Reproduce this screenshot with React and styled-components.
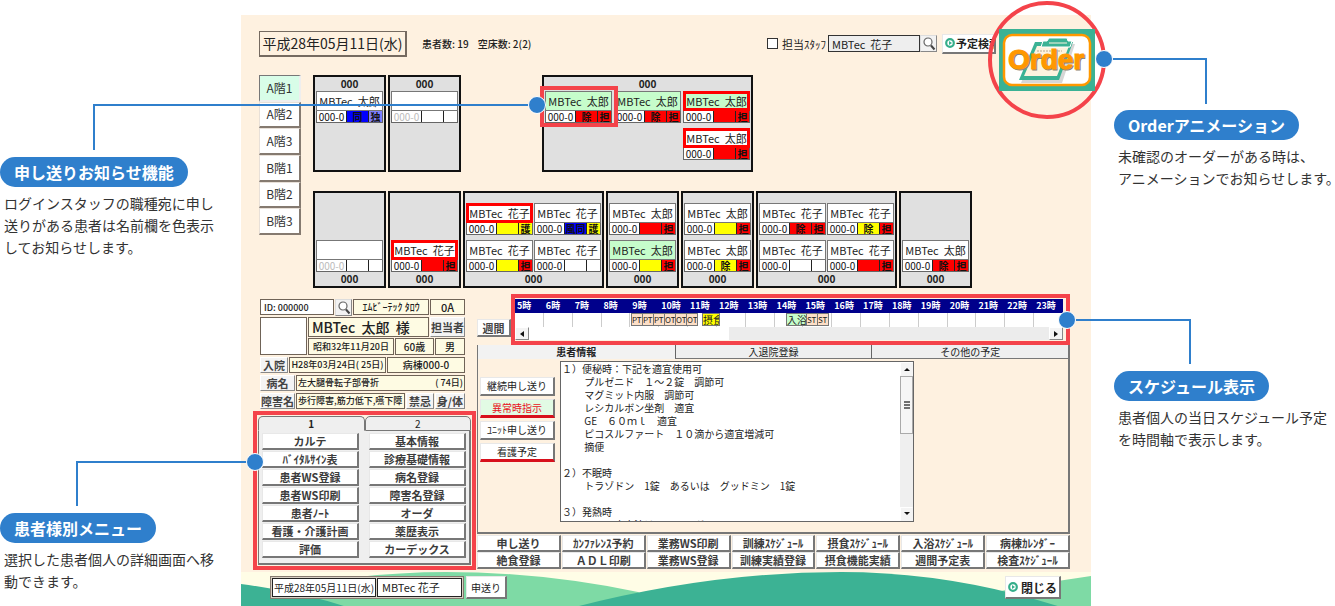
import React from "react";
import styled, { createGlobalStyle, css } from "styled-components";

const GlobalStyle = createGlobalStyle`
  *, *::before, *::after { box-sizing: border-box; }
  body {
    margin: 0;
    background: #fff;
    color: #222;
    font-family: "Noto Sans CJK JP", "Noto Sans", sans-serif;
  }
  button, input, textarea { font-family: inherit; color: inherit; margin: 0; border-radius: 0; }
`;

const BLUE = "#2f7fcc";
const RED = "#f4434a";

/* ---------- page frame and side notes ---------- */

const Page = styled.div`
  display: grid;
  grid-template-columns: 241px minmax(850px, 1fr) 244px;
  min-height: 100vh;
`;

const Aside = styled.aside`
  position: relative;
  z-index: 3;
  display: flex;
  flex-direction: column;
  align-items: flex-start;
  padding-top: ${(p) => p.$top}px;
  padding-left: ${(p) => p.$left || 0}px;
  gap: ${(p) => p.$gap}px;
`;

const NoteTitle = styled.h2`
  display: inline-block;
  margin: 0;
  padding: 0 14px;
  height: 30px;
  line-height: 30px;
  border-radius: 15px;
  background: ${BLUE};
  color: #fff;
  font-size: 16px;
  font-weight: 700;
  white-space: nowrap;
`;

const NoteText = styled.p`
  margin: 5px 0 0;
  padding-left: 4px;
  font-size: 14px;
  line-height: 22px;
  color: #333;
  white-space: nowrap;
`;

const Connector = styled.div`
  position: absolute;
  left: ${(p) => p.$x}px;
  top: ${(p) => p.$y}px;
  width: ${(p) => p.$w}px;
  height: ${(p) => p.$h}px;
  border-top: 2px solid ${BLUE};
  ${(p) => (p.$right ? "border-right" : "border-left")}: 2px solid ${BLUE};
  pointer-events: none;
  &::after {
    content: "";
    position: absolute;
    top: -10px;
    ${(p) => (p.$right ? "left" : "right")}: -9px;
    width: 18px;
    height: 18px;
    border: 1px solid #fff;
    border-radius: 50%;
    background: ${BLUE};
  }
`;

function Note({ title, lines }) {
  return (
    <section>
      <NoteTitle>{title}</NoteTitle>
      <NoteText>
        {lines.map((l) => (
          <React.Fragment key={l}>
            {l}
            <br />
          </React.Fragment>
        ))}
      </NoteText>
    </section>
  );
}

/* ---------- application window ---------- */

const Window = styled.main`
  position: relative;
  display: flex;
  flex-direction: column;
  margin-top: 15px;
  background: #fef1e0;
`;

const raised = css`
  background: #fff;
  border: 1px solid #e8e8e8;
  border-right: 2px solid #777;
  border-bottom: 2px solid #777;
`;

const Header = styled.header`
  display: flex;
  align-items: center;
  height: 27px;
  margin: 15px 95px 18px 18px;
  font-size: 10px;
`;

const DateBox = styled.div`
  width: 148px;
  height: 26px;
  line-height: 22px;
  text-align: center;
  border: 1px solid #756a60;
  border-right-width: 2px;
  border-bottom-width: 2px;
  font-size: 14px;
  font-weight: 400;
  white-space: nowrap;
`;

const Counts = styled.div`
  display: flex;
  gap: 9px;
  margin-left: 15px;
  font-weight: 500;
  white-space: nowrap;
`;

const StaffSearch = styled.div`
  display: flex;
  align-items: center;
  margin-left: auto;
  height: 20px;
`;

const CheckLabel = styled.label`
  display: flex;
  align-items: center;
  gap: 4px;
  width: 61px;
  white-space: nowrap;
  font-size: 11px;
`;

const Check = styled.input`
  appearance: none;
  flex: none;
  width: 11px;
  height: 11px;
  border: 1px solid #333;
  background: #fff;
`;

const StaffInput = styled.input`
  width: 92px;
  height: 17px;
  padding: 0 3px;
  border: 1px solid #333;
  background: #eee;
  font-size: 11px;
`;

const IconButton = styled.button`
  display: flex;
  align-items: center;
  justify-content: center;
  width: 17px;
  height: 17px;
  padding: 0;
  background: #f2f2f2;
  border: 1px solid #ddd;
  border-right-color: #888;
  border-bottom-color: #888;
`;

const PlanButton = styled.button`
  ${raised}
  display: flex;
  align-items: center;
  gap: 1px;
  width: 54px;
  height: 20px;
  margin-left: 5px;
  padding: 0 0 0 2px;
  overflow: hidden;
  white-space: nowrap;
  font-size: 11px;
  font-weight: 700;
`;

const Glyph = styled.svg`
  flex: none;
  display: block;
`;

function Magnifier() {
  return (
    <Glyph width="14" height="14" viewBox="0 0 14 14" aria-hidden="true">
      <circle cx="6" cy="5" r="4" fill="#fff" stroke="#666" strokeWidth="1.2" />
      <path d="M9 8.500 L12.500 12.500" stroke="#444" strokeWidth="2" />
    </Glyph>
  );
}

function PlayDot() {
  return (
    <Glyph width="10" height="10" viewBox="0 0 10 10" aria-hidden="true">
      <circle cx="5" cy="5" r="3.800" fill="#fff" stroke="#35ae8b" strokeWidth="2.200" />
      <path d="M4 3 L7 5 L4 7 Z" fill="#35ae8b" />
    </Glyph>
  );
}

const OrderRing = styled.div`
  position: absolute;
  z-index: 2;
  top: -14px;
  right: -15px;
  width: 118px;
  height: 118px;
  display: flex;
  align-items: center;
  justify-content: center;
  border: 4px solid ${RED};
  border-radius: 50%;
`;

function OrderLogo() {
  return (
    <Glyph width="96" height="62" viewBox="0 0 96 62" role="img" aria-label="Order">
      <rect width="96" height="62" fill="#3bb294" />
      <rect x="5" y="6" width="86" height="50" rx="8" fill="#fff" stroke="#ff9800" strokeWidth="2.500" />
      <path d="M38 15 L76 15 L63 54 L22 54 Z" fill="#bbb" opacity="0.6" />
      <path d="M36 13 L74 13 L60 51 L20 51 Z" fill="#3bb294" />
      <path d="M38 17 L70 17 L58 47 L25 47 Z" fill="#fdf3df" />
      <path d="M44 12 L48 12 L50 9 L68 9 L69 12 L73 12 L71 18 L42 18 Z" fill="#3bb294" stroke="#fff" strokeWidth="1" />
      <path d="M50 14 H68" stroke="#fdf3df" strokeWidth="1" />
      <path d="M38 22 H63" stroke="#b9a88e" strokeDasharray="2 1" />
      <text x="10" y="41" fontFamily="Liberation Sans, Arial, sans-serif" fontWeight="700" fontSize="28" fill="#8d8474" stroke="#8d8474" strokeWidth="1">
        Order
      </text>
      <text x="9" y="40" fontFamily="Liberation Sans, Arial, sans-serif" fontWeight="700" fontSize="28" fill="#ff9800" stroke="#ff9800" strokeWidth="1">
        Order
      </text>
    </Glyph>
  );
}

/* ---------- ward map ---------- */

const WardArea = styled.div`
  display: flex;
  align-items: flex-start;
  gap: 12px;
  margin-left: 18px;
`;

const FloorNav = styled.nav`
  display: grid;
  grid-template-rows: repeat(6, 1fr);
  width: 42px;
  height: 160px;
`;

const FloorButton = styled.button`
  padding: 0;
  font-size: 12px;
  line-height: 18px;
  color: #333;
  background: ${(p) => (p.$on ? "#d8fde8" : "#fff")};
  border: 1px solid ${(p) => (p.$on ? "#777" : "#e8e0d8")};
  border-right: 2px solid ${(p) => (p.$on ? "#eee" : "#857a70")};
  border-bottom: 2px solid ${(p) => (p.$on ? "#eee" : "#857a70")};
`;

const WardRows = styled.div`
  display: flex;
  flex-direction: column;
  gap: 19px;
`;

const WardRow = styled.div`
  display: flex;
  gap: 2px;
`;

const Gap = styled.div`
  width: 77px;
`;

const Room = styled.section`
  display: flex;
  flex-direction: ${(p) => (p.$labelTop ? "column" : "column-reverse")};
  justify-content: ${(p) => (p.$labelTop ? "flex-start" : "space-between")};
  height: 97px;
  padding: ${(p) => (p.$labelTop ? "0" : "10px")} 1px 0;
  border: 2px solid #111;
  background: #e0e0e0;
`;

const RoomLabel = styled.div`
  height: 14px;
  line-height: 14px;
  text-align: center;
  font-size: 10px;
  font-weight: 700;
`;

const Beds = styled.div`
  display: grid;
  grid-template-columns: repeat(${(p) => p.$cols}, 67px);
  grid-auto-rows: 32px;
  gap: 5px ${(p) => (p.$cols > 2 ? 2 : 1)}px;
`;

const Bed = styled.div`
  position: relative;
`;

const BedName = styled.div`
  height: 20px;
  line-height: ${(p) => (p.$alert ? 14 : 18)}px;
  text-align: center;
  font-size: 11px;
  white-space: pre;
  background: ${(p) => (p.$green ? "#c6fdcb" : "#fff")};
  border: ${(p) => (p.$alert ? "3px solid #f00" : "1px solid #777")};
`;

const BedStatus = styled.div`
  display: grid;
  grid-template-columns: 29px 22px 14px;
  height: 12px;
  border: 1px solid #666;
  border-top: 0;
`;

const fills = { r: "#f00", y: "#ff0", b: "#00f", p: "#8080ff", w: "#fff" };

const StatusCell = styled.span`
  height: 11px;
  line-height: 11px;
  text-align: center;
  font-size: 10px;
  font-weight: ${(p) => (p.$bold ? 700 : 400)};
  color: ${(p) => (p.$dim ? "#bbb" : "#111")};
  background: ${(p) => fills[p.$fill]};
  & + & { border-left: 1px solid #222; }
`;

const BedFrame = styled.div`
  position: absolute;
  z-index: 2;
  top: -5px;
  right: -6px;
  bottom: -4px;
  left: -5px;
  border: 4px solid ${RED};
`;

const T = "MBTec  太郎";
const H = "MBTec  花子";
const bed = (name, mid, midText, end, endText, extra = {}) => ({ name, mid, midText, end, endText, ...extra });
const vacant = bed("", "w", "", "w", "", { dim: true });

const upperRooms = [
  { cols: 1, beds: [bed(T, "b", "同", "p", "独")] },
  { cols: 1, beds: [vacant] },
  null,
  {
    cols: 3,
    beds: [
      bed(T, "r", "除", "r", "担", { green: true, framed: true }),
      bed(T, "r", "除", "r", "担", { green: true }),
      bed(T, "r", "", "r", "担", { green: true, alert: true }),
      null,
      null,
      bed(T, "r", "", "r", "担", { alert: true }),
    ],
  },
];

const lowerRooms = [
  { cols: 1, beds: [null, vacant] },
  { cols: 1, beds: [null, bed(H, "r", "", "r", "担", { alert: true })] },
  {
    cols: 2,
    beds: [
      bed(H, "y", "", "y", "護", { alert: true }),
      bed(H, "b", "風同", "y", "護"),
      bed(H, "y", "", "r", "担"),
      bed(H, "w", "", "w", ""),
    ],
  },
  { cols: 1, beds: [bed(T, "r", "", "r", "担"), bed(T, "y", "", "r", "担", { green: true })] },
  { cols: 1, beds: [bed(T, "y", "", "r", "担"), bed(T, "y", "除", "r", "担")] },
  {
    cols: 2,
    beds: [
      bed(H, "r", "除", "r", "担"),
      bed(H, "y", "除", "r", "担"),
      bed(H, "w", "", "w", ""),
      bed(H, "r", "", "r", "担"),
    ],
  },
  { cols: 1, beds: [null, bed(T, "r", "除", "r", "担")] },
];

function WardRooms({ rooms, labelTop }) {
  return (
    <WardRow>
      {rooms.map((room, i) =>
        room ? (
          <Room key={i} $labelTop={labelTop}>
            <RoomLabel>000</RoomLabel>
            <Beds $cols={room.cols}>
              {room.beds.map((b, j) =>
                b ? (
                  <Bed key={j}>
                    <BedName $green={b.green} $alert={b.alert}>{b.name}</BedName>
                    <BedStatus>
                      <StatusCell $fill="w" $dim={b.dim}>000-0</StatusCell>
                      <StatusCell $fill={b.mid} $bold>{b.midText}</StatusCell>
                      <StatusCell $fill={b.end} $bold>{b.endText}</StatusCell>
                    </BedStatus>
                    {b.framed && <BedFrame />}
                  </Bed>
                ) : (
                  <span key={j} />
                )
              )}
            </Beds>
          </Room>
        ) : (
          <Gap key={i} />
        )
      )}
    </WardRow>
  );
}

/* ---------- patient panel ---------- */

const Lower = styled.div`
  display: grid;
  grid-template-columns: 224px minmax(0, 1fr);
  margin: 6px 21px 2px 12px;
`;

const Patient = styled.section`
  display: flex;
  flex-direction: column;
  gap: 2px;
  margin: 5px 12px 0 7px;
  height: 112px;
`;

const PatientRow = styled.div`
  display: flex;
  gap: 1px;
  height: ${(p) => p.$h || 17}px;
`;

const PatientMain = styled.div`
  display: grid;
  grid-template-columns: 47px 1fr;
  gap: 1px;
  height: 38px;
`;

const PatientLines = styled.div`
  display: flex;
  flex-direction: column;
  gap: 1px;
`;

const Field = styled.div`
  flex: ${(p) => (p.$w ? `0 0 ${p.$w}px` : "1 1 0")};
  display: flex;
  align-items: center;
  justify-content: ${(p) => p.$align || "center"};
  min-width: 0;
  padding: 0 ${(p) => p.$pad || 0}px;
  white-space: pre;
  background: #fefbe3;
  border: 1px solid #6f6357;
  font-size: ${(p) => p.$size || 10}px;
  line-height: 14px;
  font-weight: 500;
`;

const IdInput = styled.input`
  width: 74px;
  height: 16px;
  padding: 0 3px;
  border: 1px solid #6f6357;
  background: #fff;
  font-size: 9px;
  font-weight: 500;
`;

const Photo = styled.div`
  background: #fff;
  border: 1px solid #6f6357;
`;

const SmallButton = styled.button`
  flex: 0 0 ${(p) => p.$w}px;
  padding: 0;
  background: #f4f4f4;
  border: 1px solid #fff;
  border-right-color: #888;
  border-bottom-color: #888;
  font-size: 11px;
  font-weight: 700;
  line-height: 14px;
  color: #444;
  white-space: nowrap;
`;

const MenuFrame = styled.section`
  width: 223px;
  height: 159px;
  padding: 1px;
  border: 4px solid ${RED};
  background: #fef1e0;
`;

const MenuTabs = styled.div`
  display: grid;
  grid-template-columns: 1fr 1fr;
  height: 15px;
`;

const MenuTab = styled.button`
  padding: 0;
  border: 1px solid #777;
  border-bottom-color: ${(p) => (p.$on ? "#efefef" : "#777")};
  border-radius: 5px 5px 0 0;
  background: #efefef;
  font-size: 10px;
  line-height: 12px;
  font-weight: ${(p) => (p.$on ? 700 : 400)};
`;

const MenuGrid = styled.div`
  display: grid;
  grid-template-columns: 1fr 1fr;
  grid-template-rows: repeat(7, 17px);
  gap: 1px 10px;
  height: 134px;
  padding: 2px 3px 0;
  background: #efefef;
  border: 1px solid #777;
  border-top: 0;
  border-right-width: 2px;
  border-bottom-width: 2px;
`;

const CommandButton = styled.button`
  ${raised}
  padding: 0;
  font-size: 11px;
  line-height: 14px;
  font-weight: 700;
  color: #3c3c3c;
  white-space: nowrap;
`;

const menu = [
  "カルテ", "基本情報",
  "ﾊﾞｲﾀﾙｻｲﾝ表", "診療基礎情報",
  "患者WS登録", "病名登録",
  "患者WS印刷", "障害名登録",
  "患者ﾉｰﾄ", "オーダ",
  "看護・介護計画", "薬歴表示",
  "評価", "カーデックス",
];

/* ---------- schedule ---------- */

const ScheduleRow = styled.div`
  display: flex;
  height: 51px;
`;

const WeekButton = styled.button`
  ${raised}
  width: 34px;
  height: 18px;
  margin-top: 25px;
  padding: 0;
  font-size: 11px;
  line-height: 14px;
  font-weight: 700;
  color: #444;
`;

const ScheduleFrame = styled.div`
  flex: 1;
  border: 4px solid ${RED};
  padding: 1px 3px 2px 0;
  background: #fef1e0;
`;

const Hours = styled.div`
  display: grid;
  grid-template-columns: repeat(19, 1fr);
  height: 14px;
  background: #00008b;
  color: #fff;
  font-size: 9px;
  font-weight: 700;
  line-height: 14px;
  span { padding-left: 2px; white-space: nowrap; }
`;

const Slots = styled.div`
  position: relative;
  display: grid;
  grid-template-columns: repeat(19, 1fr);
  height: 14px;
  background: #fff;
  i { border-right: 1px solid #ccc; }
`;

const Event = styled.span`
  position: absolute;
  top: 0;
  height: 13px;
  overflow: hidden;
  border: 1px solid #777;
  background: ${(p) => p.$bg};
  font-size: ${(p) => (p.$wide ? 10 : 8)}px;
  line-height: 11px;
  white-space: nowrap;
`;

const PEACH = "#fddfc7";
const events = [
  [116, 12, "PT", PEACH], [127, 12, "PT", PEACH], [138, 12, "PT", PEACH],
  [149, 12, "OT", PEACH], [160, 12, "OT", PEACH], [171, 12, "OT", PEACH],
  [187, 18, "摂食", "#ff0"], [271, 21, "入浴", "#c6fdcb"],
  [291, 12, "ST", PEACH], [302, 12, "ST", PEACH],
];

const HScroll = styled.div`
  display: grid;
  grid-template-columns: 14px 200px 1fr 14px;
  height: 13px;
  background: #ececec;
`;

const ScrollArrow = styled.button`
  display: flex;
  align-items: center;
  justify-content: center;
  padding: 0;
  background: #f4f4f4;
  border: 1px solid #fff;
  border-right-color: ${(p) => (p.$flat ? "#f4f4f4" : "#888")};
  border-bottom-color: ${(p) => (p.$flat ? "#f4f4f4" : "#888")};
`;

const Thumb = styled.div`
  background: #fff;
`;

function Arrow({ d }) {
  return (
    <Glyph width="6" height="6" viewBox="0 0 6 6" aria-hidden="true">
      <path d={d} fill="#111" />
    </Glyph>
  );
}

/* ---------- information tabs ---------- */

const InfoPanel = styled.section`
  height: 189px;
  border: 1px solid #777;
  border-top: 0;
  border-right-width: 2px;
  border-bottom-width: 2px;
`;

const InfoTabs = styled.div`
  display: grid;
  grid-template-columns: repeat(3, 1fr);
  height: 14px;
`;

const InfoTab = styled.button`
  padding: 0;
  background: ${(p) => (p.$on ? "#f2f2f2" : "#efefef")};
  border: 0;
  border-left: ${(p) => (p.$on ? 0 : 1)}px solid #666;
  border-bottom: 1px solid ${(p) => (p.$on ? "#f2f2f2" : "#777")};
  font-size: 10px;
  line-height: 12px;
  font-weight: ${(p) => (p.$on ? 700 : 400)};
`;

const InfoBody = styled.div`
  display: flex;
  gap: 5px;
  padding: 2px 0 0 2px;
`;

const SideButtons = styled.div`
  display: flex;
  flex-direction: column;
  gap: 3px;
  width: 75px;
  padding-top: 16px;
`;

const SideButton = styled.button`
  ${raised}
  height: 19px;
  padding: 0;
  font-size: 10px;
  line-height: 14px;
  white-space: nowrap;
  color: ${(p) => (p.$on ? "#e8111a" : "#222")};
  background: ${(p) => (p.$on ? "#e2fbe4" : "#fff")};
  border-bottom: ${(p) => (p.$marked ? "3px solid #d8101c" : "2px solid #777")};
`;

const MemoBox = styled.div`
  display: flex;
  width: 354px;
  height: 161px;
  border: 1px solid #666;
  background: #fff;
`;

const Memo = styled.textarea`
  flex: 1;
  padding: 0 1px;
  border: 0;
  outline: 0;
  resize: none;
  overflow: hidden;
  background: transparent;
  font-size: 10px;
  line-height: 13px;
  white-space: pre;
`;

const VScroll = styled.div`
  display: grid;
  grid-template-rows: 14px 58px 1fr 14px;
  width: 13px;
  background: #efefef;
`;

const VThumb = styled.div`
  display: flex;
  align-items: center;
  justify-content: center;
  border: 1px solid #aaa;
  background: #f6f6f6;
`;

const Commands = styled.div`
  display: grid;
  grid-template-columns: repeat(7, 1fr);
  grid-auto-rows: 17px;
  gap: 0 1px;
  padding-top: 1px;
`;

const commands = [
  "申し送り", "ｶﾝﾌｧﾚﾝｽ予約", "業務WS印刷", "訓練ｽｹｼﾞｭｰﾙ", "摂食ｽｹｼﾞｭｰﾙ", "入浴ｽｹｼﾞｭｰﾙ", "病棟ｶﾚﾝﾀﾞｰ",
  "絶食登録", "ＡＤＬ印刷", "業務WS登録", "訓練実績登録", "摂食機能実績", "週間予定表", "検査ｽｹｼﾞｭｰﾙ",
];

const memo = `１）便秘時：下記を適宜使用可
　　 プルゼニド　１〜２錠　調節可
　　 マグミット内服　調節可
　　 レシカルボン坐剤　適宜
　　 GE　６０ｍｌ　適宜
　　 ピコスルファート　１０滴から適宜増減可
　　 摘便

２）不眠時
　　 トラゾドン　1錠　あるいは　グッドミン　1錠

３）発熱時
　　 ３８８度十滴はト　ソンガ`;

/* ---------- footer ---------- */

const Footer = styled.footer`
  position: relative;
  flex: 1;
  display: flex;
  align-items: flex-start;
  min-height: 35px;
  padding: 4px 30px 0 29px;
  background: #fffde6;
`;

const Waves = styled.svg`
  position: absolute;
  inset: 0;
  width: 100%;
  height: 100%;
`;

const SessionBox = styled.div`
  position: relative;
  display: flex;
  gap: 1px;
  height: 23px;
  padding: 1px;
  border: 1px solid #857a70;
  background: #d8d0c4;
  font-size: 10px;
`;

const SessionField = styled.div`
  width: ${(p) => p.$w}px;
  height: 19px;
  padding: 0 ${(p) => p.$pad}px;
  line-height: 17px;
  border: 1px solid #222;
  background: #fff;
  font-size: ${(p) => p.$size}px;
  white-space: nowrap;
`;

const FooterButton = styled.button`
  ${raised}
  position: relative;
  display: flex;
  align-items: center;
  justify-content: center;
  gap: 3px;
  height: 23px;
  padding: 0 ${(p) => p.$pad}px;
  margin-left: ${(p) => (p.$end ? "auto" : "2px")};
  font-size: ${(p) => (p.$end ? 12 : 10)}px;
  font-weight: ${(p) => (p.$end ? 700 : 400)};
  white-space: nowrap;
`;

export default function App() {
  return (
    <Page>
      <GlobalStyle />
      <Aside $top={157} $gap={255}>
        <Note title="申し送りお知らせ機能" lines={["ログインスタッフの職種宛に申し", "送りがある患者は名前欄を色表示", "してお知らせします。"]} />
        <Note title="患者様別メニュー" lines={["選択した患者個人の詳細画面へ移", "動できます。"]} />
        <Connector $x={93} $y={104} $w={444} $h={46} />
        <Connector $x={76} $y={461} $w={179} $h={45} />
      </Aside>

      <Window>
        <Header>
          <DateBox>平成28年05月11日(水)</DateBox>
          <Counts>
            <span>患者数: 19</span>
            <span>空床数: 2(2)</span>
          </Counts>
          <StaffSearch>
            <CheckLabel>
              <Check type="checkbox" />
              担当ｽﾀｯﾌ
            </CheckLabel>
            <StaffInput aria-label="担当スタッフ名" defaultValue="MBTec  花子" />
            <IconButton aria-label="検索"><Magnifier /></IconButton>
            <PlanButton><PlayDot />予定検索</PlanButton>
          </StaffSearch>
        </Header>
        <OrderRing><OrderLogo /></OrderRing>

        <WardArea>
          <FloorNav>
            {["A階1", "A階2", "A階3", "B階1", "B階2", "B階3"].map((f, i) => (
              <FloorButton key={f} $on={i === 0}>{f}</FloorButton>
            ))}
          </FloorNav>
          <WardRows>
            <WardRooms rooms={upperRooms} labelTop />
            <WardRooms rooms={lowerRooms} />
          </WardRows>
        </WardArea>

        <Lower>
          <div>
            <Patient>
              <PatientRow $h={16}>
                <IdInput aria-label="患者ID" defaultValue="ID: 000000" />
                <IconButton aria-label="患者検索"><Magnifier /></IconButton>
                <Field>ｴﾑﾋﾞｰﾃｯｸ ﾀﾛｳ</Field>
                <Field $w={35} $size={11}>0A</Field>
              </PatientRow>
              <PatientMain>
                <Photo />
                <PatientLines>
                  <PatientRow $h={20}>
                    <Field $size={14} $align="flex-start" $pad={3}>MBTec  太郎  様</Field>
                    <SmallButton $w={35}>担当者</SmallButton>
                  </PatientRow>
                  <PatientRow>
                    <Field $size={9}>昭和32年11月20日</Field>
                    <Field $w={39}>60歳</Field>
                    <Field $w={30}>男</Field>
                  </PatientRow>
                </PatientLines>
              </PatientMain>
              <PatientRow $h={16}>
                <SmallButton $w={28}>入院</SmallButton>
                <Field $size={9}>H28年03月24日( 25日)</Field>
                <Field $w={78}>病棟000-0</Field>
              </PatientRow>
              <PatientRow $h={16}>
                <SmallButton $w={35}>病名</SmallButton>
                <Field $align="space-between" $size={9} $pad={1}>
                  <span>左大腿骨転子部骨折</span>
                  <span>( 74日)</span>
                </Field>
              </PatientRow>
              <PatientRow $h={16}>
                <SmallButton $w={35}>障害名</SmallButton>
                <Field $align="flex-start" $size={9} $pad={1}>歩行障害,筋力低下,嚥下障</Field>
                <SmallButton $w={28}>禁忌</SmallButton>
                <SmallButton $w={30}>身/体</SmallButton>
              </PatientRow>
            </Patient>
            <MenuFrame>
              <MenuTabs>
                <MenuTab $on>1</MenuTab>
                <MenuTab>2</MenuTab>
              </MenuTabs>
              <MenuGrid>
                {menu.map((m) => <CommandButton key={m}>{m}</CommandButton>)}
              </MenuGrid>
            </MenuFrame>
          </div>

          <div>
            <ScheduleRow>
              <WeekButton>週間</WeekButton>
              <ScheduleFrame>
                <Hours>
                  {Array.from({ length: 19 }, (_, i) => <span key={i}>{i + 5}時</span>)}
                </Hours>
                <Slots>
                  {Array.from({ length: 19 }, (_, i) => <i key={i} />)}
                  {events.map(([x, w, label, bg]) => (
                    <Event key={x} $bg={bg} $wide={w > 12} style={{ left: `${(x / 548) * 100}%`, width: w }}>{label}</Event>
                  ))}
                </Slots>
                <HScroll>
                  <ScrollArrow aria-label="前へ"><Arrow d="M5 0 V6 L1 3 Z" /></ScrollArrow>
                  <Thumb />
                  <span />
                  <ScrollArrow aria-label="次へ"><Arrow d="M1 0 V6 L5 3 Z" /></ScrollArrow>
                </HScroll>
              </ScheduleFrame>
            </ScheduleRow>
            <InfoPanel>
              <InfoTabs>
                <InfoTab $on>患者情報</InfoTab>
                <InfoTab>入退院登録</InfoTab>
                <InfoTab>その他の予定</InfoTab>
              </InfoTabs>
              <InfoBody>
                <SideButtons>
                  <SideButton>継続申し送り</SideButton>
                  <SideButton $on $marked>異常時指示</SideButton>
                  <SideButton>ﾕﾆｯﾄ申し送り</SideButton>
                  <SideButton $marked>看護予定</SideButton>
                </SideButtons>
                <MemoBox>
                  <Memo aria-label="患者情報" readOnly value={memo} />
                  <VScroll>
                    <ScrollArrow $flat aria-label="上へ"><Arrow d="M0 5 H6 L3 2 Z" /></ScrollArrow>
                    <VThumb>
                      <Glyph width="6" height="8" viewBox="0 0 6 8" aria-hidden="true">
                        <path d="M0 1 H6 M0 4 H6 M0 7 H6" stroke="#444" strokeWidth="1.500" />
                      </Glyph>
                    </VThumb>
                    <span />
                    <ScrollArrow $flat aria-label="下へ"><Arrow d="M0 1 H6 L3 4 Z" /></ScrollArrow>
                  </VScroll>
                </MemoBox>
              </InfoBody>
            </InfoPanel>
            <Commands>
              {commands.map((c) => <CommandButton key={c}>{c}</CommandButton>)}
            </Commands>
          </div>
        </Lower>

        <Footer>
          <Waves viewBox="0 0 850 35" preserveAspectRatio="none" aria-hidden="true">
            <path d="M0 25 Q110 0 205 0 Q300 0 397 20 L420 35 H0 Z" fill="#7edaa5" />
            <path d="M730 35 L755 20 Q800 11 850 4 V35 Z" fill="#7edaa5" />
            <path d="M0 12 Q60 20 106 35 H0 Z" fill="#3cb294" />
            <path d="M334 35 Q470 0 600 0 Q710 0 820 35 Z" fill="#3cb294" />
          </Waves>
          <SessionBox>
            <SessionField $w={104} $size={10} $pad={1}>平成28年05月11日(水)</SessionField>
            <SessionField $w={85} $size={11} $pad={4}>MBTec 花子</SessionField>
          </SessionBox>
          <FooterButton $pad={4}>申送り</FooterButton>
          <FooterButton $end $pad={2}><PlayDot />閉じる</FooterButton>
        </Footer>
      </Window>

      <Aside $top={110} $left={23} $gap={182}>
        <Note title="Orderアニメーション" lines={["未確認のオーダーがある時は、", "アニメーションでお知らせします。"]} />
        <Note title="スケジュール表示" lines={["患者個人の当日スケジュール予定", "を時間軸で表示します。"]} />
        <Connector $right $x={13} $y={58} $w={103} $h={46} />
        <Connector $right $x={-24} $y={319} $w={124} $h={45} />
      </Aside>
    </Page>
  );
}
